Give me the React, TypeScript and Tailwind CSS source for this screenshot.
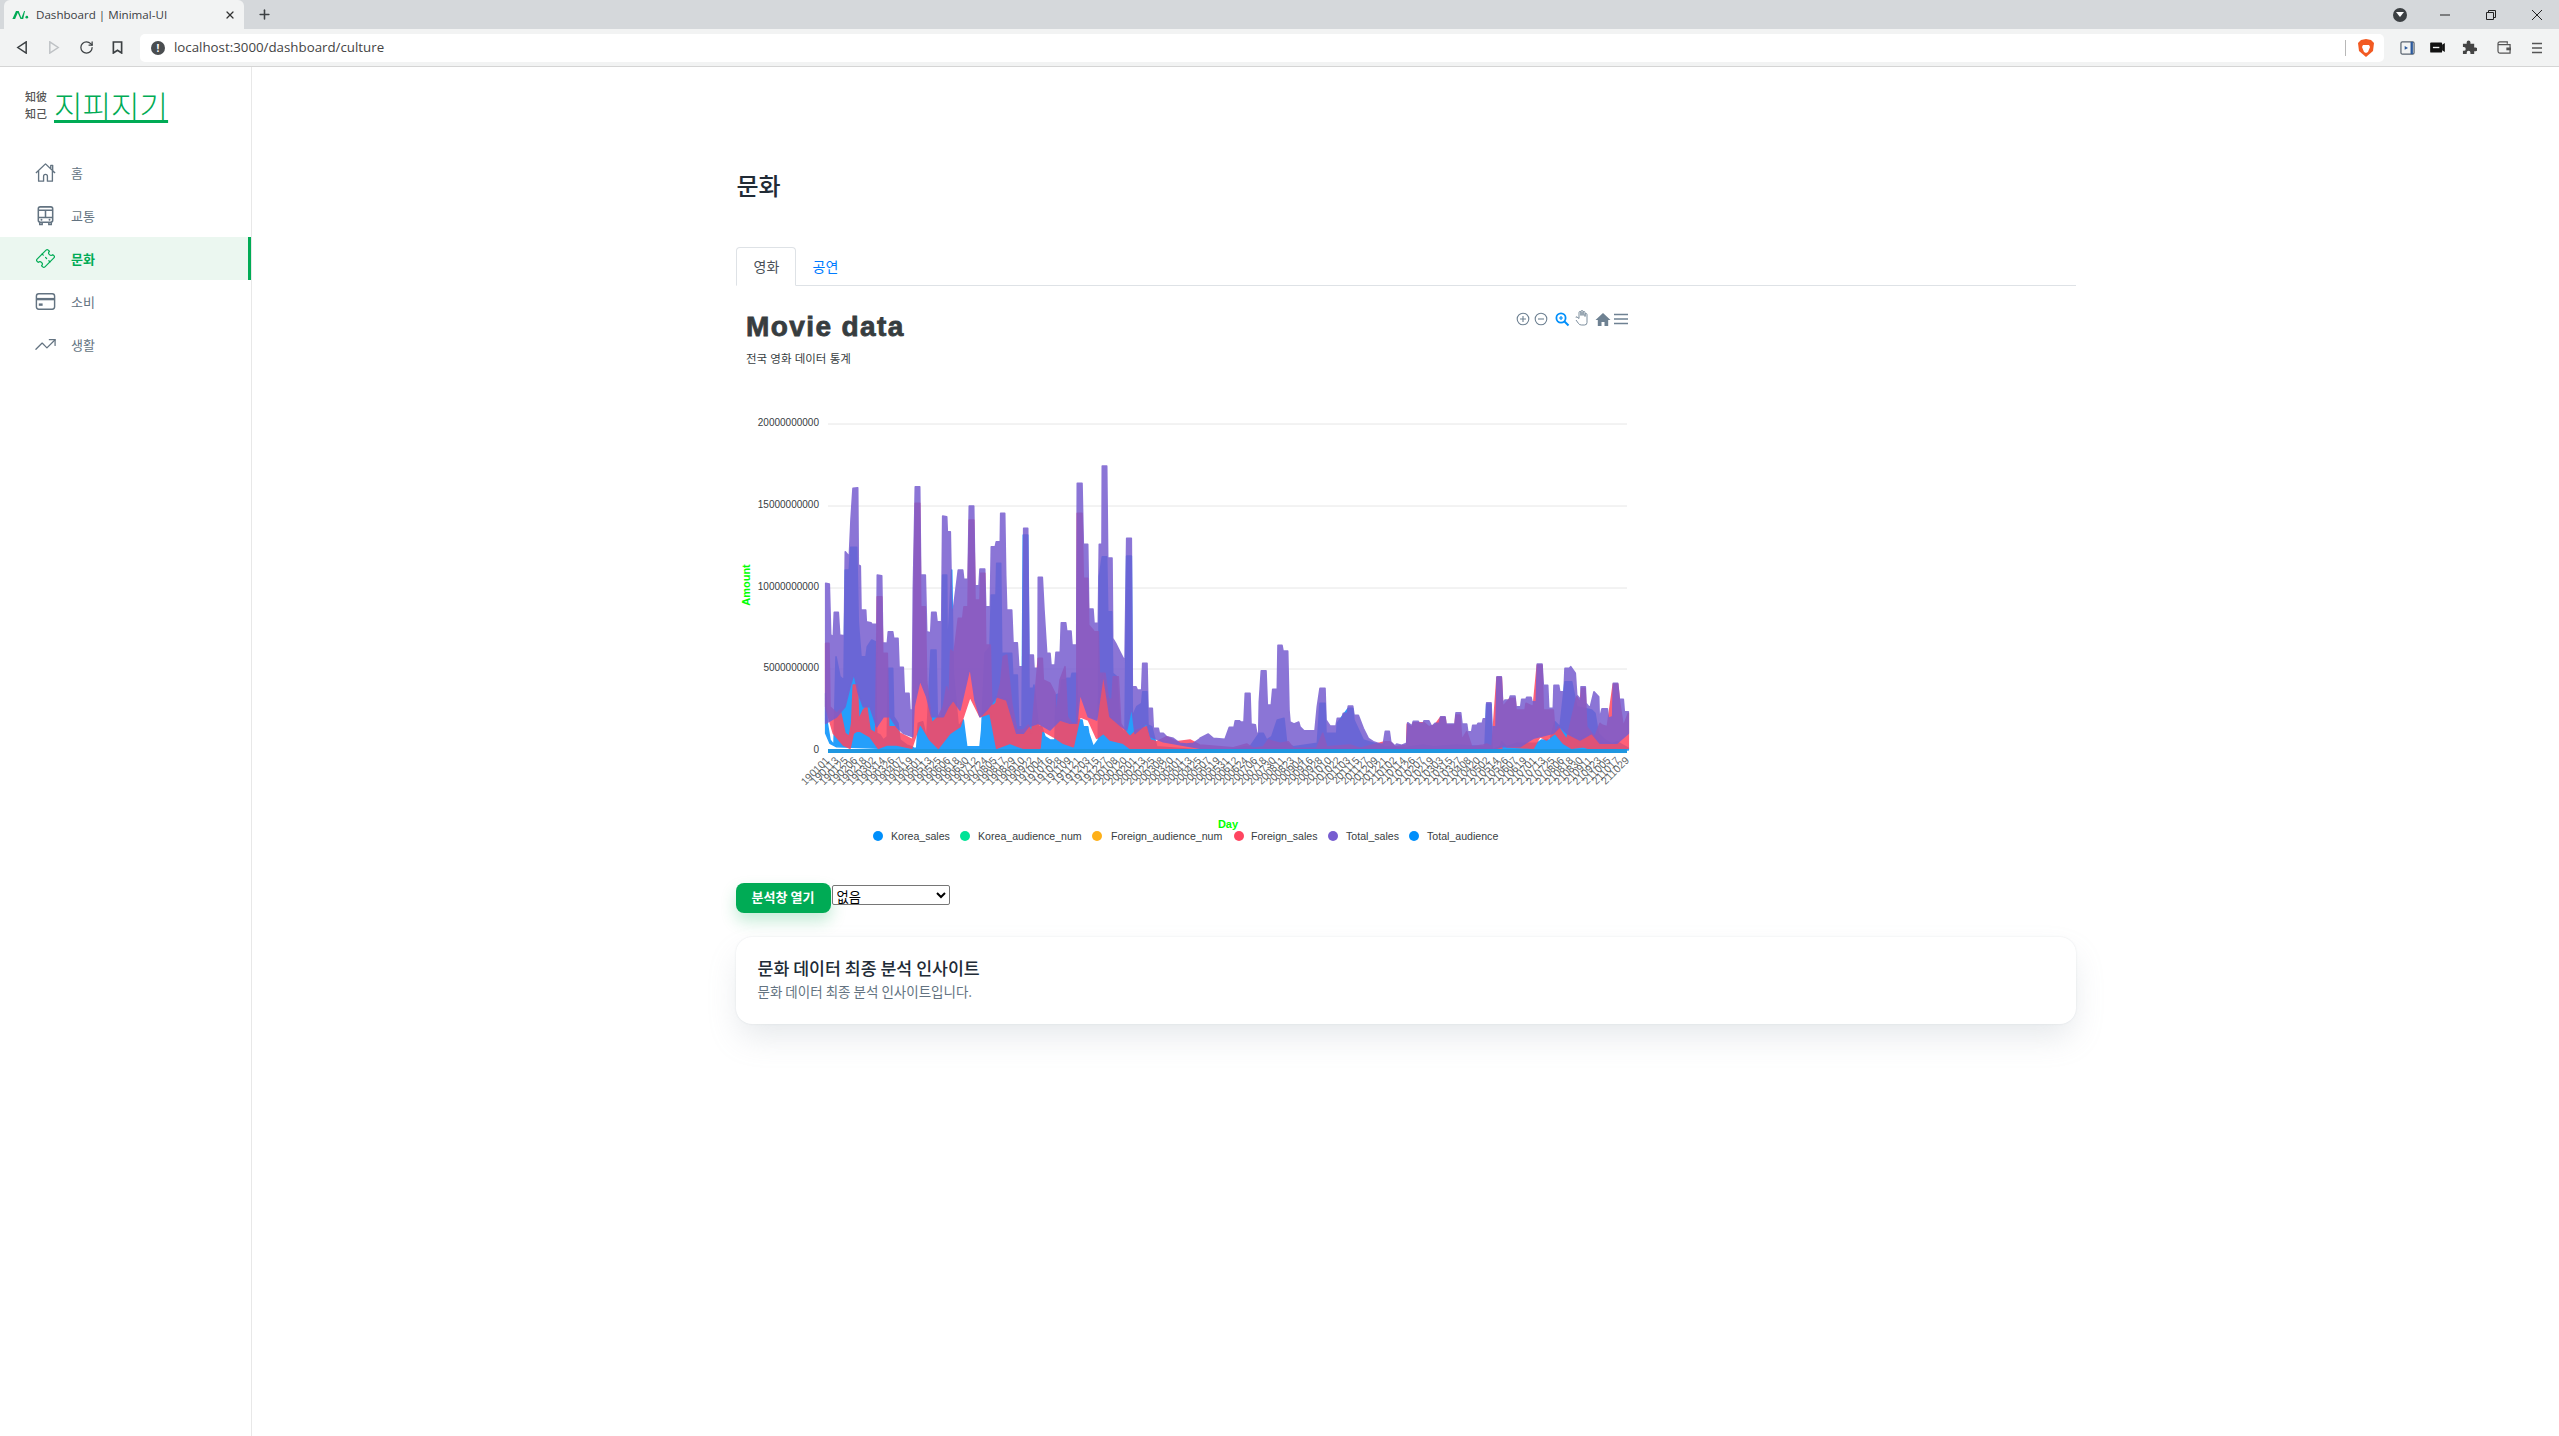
import { Plus, RotateCw, Ticket, TrendingUp, X } from "lucide-react";

type P = [number, number];
const purpleA: P[] = [[287,430],[298,432],[302,585],[310,590],[313,517],[325,517],[329,585],[343,587],[346,335],[358,350],[363,238],[369,145],[383,143],[385,375],[391,378],[393,510],[407,510],[409,545],[423,548],[425,552],[437,553],[440,660],[442,405],[455,407],[458,608],[472,610],[475,575],[488,575],[491,595],[504,595],[507,682],[520,682],[523,760],[537,760],[540,810],[547,810],[550,450],[556,140],[569,140],[572,405],[586,405],[590,575],[602,578],[605,517],[618,517],[621,545],[635,545],[638,228],[650,230],[652,275],[661,275],[665,510],[670,510],[685,390],[698,390],[701,418],[714,418],[718,198],[731,198],[735,437],[747,437],[750,387],[764,387],[767,500],[781,500],[784,320],[796,320],[799,305],[811,305],[812,220],[824,220],[827,405],[830,510],[845,510],[849,608],[862,608],[866,680],[878,680],[881,265],[893,265],[897,645],[910,645],[912,685],[924,685],[925,412],[937,412],[942,510],[950,640],[960,640],[963,675],[975,675],[978,637],[991,637],[994,548],[1007,548],[1010,573],[1023,573],[1026,615],[1040,615],[1042,130],[1056,130],[1060,313],[1073,313],[1076,507],[1089,507],[1092,550],[1105,550],[1108,313],[1116,313],[1117,78],[1130,78],[1133,354],[1146,354],[1148,595],[1157,610],[1172,640],[1185,665],[1190,295],[1204,295],[1207,740],[1218,740],[1222,750],[1235,750],[1238,670],[1251,670],[1254,805],[1267,805],[1270,865],[1285,865],[1288,880],[1300,880],[1310,890],[1330,895],[1350,910],[1370,912],[1390,910],[1409,897]];
const purpleB: P[] = [[0,415],[25,402],[40,415],[75,418],[88,382],[102,382],[106,362],[118,362],[122,366],[132,366],[136,280],[150,280],[153,372],[166,374],[170,400],[176,400],[178,305],[184,212],[198,212],[202,315],[214,315],[218,268],[232,268],[234,136],[246,136],[249,153],[263,153],[267,330],[270,366],[282,372],[296,366],[300,380],[312,392],[345,392],[352,320],[360,265],[375,265],[378,360],[390,378],[408,378],[412,355],[426,355],[430,340],[442,340],[445,318],[458,318],[462,346],[475,346],[490,385],[505,415],[520,425],[540,432],[550,432],[556,394],[568,394],[572,425],[585,438],[590,432],[605,436],[620,430],[623,368],[636,378],[640,364],[655,364],[657,370],[670,370],[672,362],[686,362],[695,380],[705,370],[718,370],[722,350],[735,350],[738,372],[765,372],[768,338],[782,338],[786,372],[800,372],[803,395],[815,395],[818,376],[831,376],[834,370],[847,370],[850,356],[858,356],[860,308],[873,308],[876,380],[888,380],[891,230],[904,230],[908,310],[915,300],[928,300],[931,288],[945,288],[948,320],[962,320],[965,298],[978,298],[980,292],[993,292],[996,305],[1009,305],[1012,192],[1026,192],[1030,256],[1043,256],[1046,325],[1060,325],[1062,256],[1076,256],[1079,275],[1092,275],[1095,205],[1108,205],[1112,200],[1126,220],[1130,285],[1143,300],[1143,260],[1156,260],[1158,310],[1170,325],[1182,275],[1196,290],[1198,360],[1206,326],[1222,326],[1225,355],[1238,350],[1240,250],[1253,250],[1258,298],[1270,298],[1273,335],[1285,335]];
const purpleBotA: P[] = [[287,850],[320,830],[345,800],[360,740],[372,700],[385,760],[400,800],[420,800],[440,860],[460,830],[480,830],[500,860],[520,880],[548,890],[552,800],[570,720],[590,770],[605,830],[640,830],[655,800],[670,780],[690,810],[720,680],[735,780],[750,830],[770,810],[800,770],[830,780],[860,880],[880,880],[895,860],[925,850],[960,870],[990,840],[1020,850],[1040,850],[1050,760],[1075,830],[1100,840],[1120,700],[1140,830],[1175,860],[1190,870],[1205,800],[1215,880],[1250,850],[1262,890],[1300,905],[1409,925]];
const purpleBotB: P[] = [[0,448],[170,448],[190,445],[250,445],[280,448],[620,448],[880,448],[905,440],[960,440],[1000,415],[1060,400],[1080,380],[1100,400],[1140,420],[1175,400],[1200,430],[1250,430],[1285,400]];
const blueA: P[] = [[287,760],[292,850],[300,900],[312,915],[318,650],[330,710],[342,720],[346,390],[358,390],[362,322],[380,322],[385,545],[393,650],[408,650],[412,620],[425,600],[436,605],[440,880],[450,885],[460,900],[472,890],[475,685],[488,685],[491,830],[504,850],[510,900],[530,915],[545,920],[552,925],[560,925],[565,850],[578,845],[590,900],[603,630],[618,630],[622,830],[635,830],[638,405],[650,405],[652,650],[665,390],[670,700],[685,860],[700,840],[710,920],[750,920],[755,870],[765,640],[780,620],[784,465],[798,465],[800,370],[812,370],[815,640],[845,640],[848,705],[862,705],[866,860],[876,860],[880,285],[893,285],[897,745],[910,745],[912,735],[925,860],[935,860],[945,890],[960,900],[975,900],[978,765],[992,760],[995,720],[1007,720],[1010,715],[1023,715],[1026,700],[1040,700],[1043,840],[1056,840],[1060,860],[1073,860],[1076,880],[1090,920],[1105,900],[1108,410],[1117,350],[1130,350],[1133,515],[1145,515],[1148,700],[1160,710],[1170,860],[1185,880],[1190,348],[1204,348],[1207,830],[1220,800],[1235,790],[1238,755],[1251,755],[1254,855],[1265,860],[1280,920],[1409,930]];
const blueB: P[] = [[0,450],[90,450],[135,440],[150,440],[178,400],[190,400],[200,420],[215,410],[232,360],[252,355],[260,430],[280,440],[352,430],[360,310],[375,310],[378,400],[410,400],[412,370],[445,325],[458,325],[462,360],[490,420],[555,440],[620,445],[630,440],[670,435],[700,440],[770,435],[855,440],[860,312],[873,312],[876,450],[900,440],[905,425],[920,440],[950,430],[1010,430],[1025,420],[1050,420],[1065,365],[1080,380],[1095,245],[1115,245],[1130,320],[1175,330],[1185,340],[1195,400],[1215,420],[1235,432],[1250,425],[1285,445]];
const blueBotA: P[] = [[287,880],[300,910],[320,920],[450,925],[1409,930]];
const blueBotB: P[] = [[0,450],[1285,450]];
const redA: P[] = [[287,610],[297,610],[300,800],[320,820],[330,810],[345,880],[358,890],[365,850],[370,735],[382,735],[386,840],[400,810],[410,800],[420,870],[437,880],[442,470],[455,470],[458,640],[472,640],[476,860],[495,860],[510,880],[530,890],[548,900],[552,450],[556,190],[569,190],[572,500],[586,500],[590,725],[605,850],[625,830],[640,800],[650,740],[658,770],[662,630],[672,640],[685,535],[698,535],[702,500],[714,500],[718,240],[731,240],[735,480],[750,480],[752,400],[764,400],[767,615],[781,615],[785,800],[798,790],[812,730],[820,650],[830,645],[845,790],[860,870],[880,870],[895,855],[905,880],[925,655],[937,655],[940,720],[960,730],[975,760],[978,840],[990,720],[1005,680],[1012,830],[1025,850],[1040,850],[1042,220],[1056,220],[1060,415],[1073,415],[1076,555],[1089,570],[1092,575],[1105,575],[1108,700],[1125,700],[1135,775],[1146,780],[1150,710],[1165,710],[1172,850],[1190,880],[1200,890],[1220,870],[1250,860],[1260,900],[1280,905],[1310,890],[1340,905],[1380,900],[1409,915]];
const redB: P[] = [[0,435],[100,443],[140,432],[160,445],[190,440],[205,420],[240,430],[265,425],[280,445],[350,445],[368,400],[380,440],[450,435],[480,445],[555,425],[570,425],[585,440],[620,435],[622,372],[636,382],[640,368],[655,368],[672,368],[686,380],[705,375],[722,352],[735,352],[738,375],[765,375],[768,345],[780,345],[785,420],[800,395],[815,440],[850,435],[860,432],[876,440],[891,232],[904,232],[908,320],[930,295],[945,295],[948,330],[975,330],[978,310],[1000,320],[1012,195],[1026,195],[1030,330],[1060,330],[1065,400],[1075,380],[1100,420],[1130,290],[1140,310],[1145,265],[1155,265],[1160,380],[1175,400],[1185,410],[1200,370],[1206,375],[1222,380],[1240,252],[1253,252],[1258,300],[1270,380],[1285,340]];
const redBotA: P[] = [[287,800],[310,880],[340,915],[360,925],[370,880],[385,870],[420,890],[445,925],[470,915],[500,915],[545,925],[570,850],[600,900],[625,925],[660,880],[690,860],[720,770],[750,830],[780,820],[800,925],[840,910],[880,925],[930,925],[935,870],[970,890],[1000,910],[1030,920],[1050,830],[1075,840],[1100,895],[1120,880],[1140,900],[1180,910],[1200,925],[1409,925]];
const redBotB: P[] = [[0,448],[905,448],[905,430],[920,440],[1000,445],[1020,410],[1040,420],[1065,400],[1090,430],[1115,445],[1150,440],[1180,450],[1285,445]];

const line = (a: P[], b: P[]): P[] => [
  ...a.map(([x, y]): P => [730 + x / 3, 440 + y / 3]),
  ...b.map(([x, y]): P => [1200 + x / 3, 600 + y / 3]),
];
const band = (top: P[], bottom: P[]) =>
  [...top, ...[...bottom].reverse()].map(([x, y]) => `${x.toFixed(1)},${y.toFixed(1)}`).join(" ");

const xLabels = Array.from({ length: 87 }, (_, i) => {
  const d = new Date(Date.UTC(2019, 0, 1 + i * 12));
  const s = (n: number) => String(n).padStart(2, "0");
  return `${s(d.getUTCFullYear() % 100)}${s(d.getUTCMonth() + 1)}${s(d.getUTCDate())}`;
});

const legend = [
  { c: "#008ffb", cx: 878, tx: 891, t: "Korea_sales" },
  { c: "#00e396", cx: 965, tx: 978, t: "Korea_audience_num" },
  { c: "#feb019", cx: 1097, tx: 1111, t: "Foreign_audience_num" },
  { c: "#ff4560", cx: 1239, tx: 1251, t: "Foreign_sales" },
  { c: "#775dd0", cx: 1333, tx: 1346, t: "Total_sales" },
  { c: "#008ffb", cx: 1414, tx: 1427, t: "Total_audience" },
];
const yTicks = [
  { y: 424, t: "20000000000" },
  { y: 506, t: "15000000000" },
  { y: 588, t: "10000000000" },
  { y: 669, t: "5000000000" },
];

function Series({ color, top, bottom }: { color: string; top: P[]; bottom: P[] }) {
  return (
    <g opacity="0.85">
      <polygon points={band(top, bottom)} fill={color} stroke={color} strokeWidth="1.6" strokeLinejoin="round" />
    </g>
  );
}

function Chart() {
  return (
    <svg viewBox="736 286 900 597" className="block h-[597px] w-[900px] font-['Liberation_Sans','Noto_Sans_CJK_KR',sans-serif]">
      <text x="746" y="336" fontSize="28" fontWeight="900" fill="#373d3f" stroke="#373d3f" strokeWidth="0.8" letterSpacing="1.4">Movie data</text>
      <text x="746" y="363" fontSize="11.5" fill="#373d3f">전국 영화 데이터 통계</text>

      <g fill="none" stroke="#6e8192" strokeWidth="1.1">
        <circle cx="1523" cy="319" r="5.8" />
        <path d="M1520 319h6M1523 316v6" />
        <circle cx="1541" cy="319" r="5.8" />
        <path d="M1538 319h6" />
      </g>
      <g fill="none" stroke="#008ffb" strokeWidth="1.8">
        <circle cx="1561" cy="318" r="4.6" />
        <path d="M1564.5 321.5l4 4" strokeWidth="2" />
        <path d="M1559 318h4M1561 316v4" strokeWidth="1.2" />
      </g>
      <path d="M1576 320l2.5 3.5q1 1.500 3 1.500h3q2.500 0 2.500-2.500v-8q0-1-1-1t-1 1v2v-4q0-1-1-1t-1 1v3v-4q0-1-1-1t-1 1v4v-3q0-1-1-1t-1 1v6l-2-1.500q-1.500-.5-1 .5" fill="#fff" stroke="#6e8192" strokeWidth="0.9" />
      <path d="M1603 313l-7.500 7h2.300v6h3.700v-4h3v4h3.700v-6h2.300z" fill="#6e8192" />
      <path d="M1614 314.500h14M1614 319h14M1614 323.500h14" stroke="#6e8192" strokeWidth="1.300" />

      {yTicks.map((t) => (
        <g key={t.t}>
          <line x1="828" x2="1627" y1={t.y} y2={t.y} stroke="#e6e6e6" />
          <text x="819" y={t.y + 2} textAnchor="end" fontSize="10" fill="#373d3f">{t.t}</text>
        </g>
      ))}
      <text x="819" y="753" textAnchor="end" fontSize="10" fill="#373d3f">0</text>

      <Series color="#008ffb" top={line(blueA, blueB)} bottom={line(blueBotA, blueBotB)} />
      <Series color="#ff4560" top={line(redA, redB)} bottom={line(redBotA, redBotB)} />
      <Series color="#775dd0" top={line(purpleA, purpleB)} bottom={line(purpleBotA, purpleBotB)} />
      <rect x="828" y="749" width="799" height="4" fill="#1f97e0" />

      {xLabels.map((t, i) => (
        <text key={t} x={830 + i * 9.3} y="761" textAnchor="end" fontSize="10.500" fill="#373d3f" fillOpacity="0.8" transform={`rotate(-45 ${830 + i * 9.3} 761)`}>{t}</text>
      ))}

      <text x="0" y="0" fontSize="11" fontWeight="900" fill="#00ff00" textAnchor="middle" transform="translate(750 585) rotate(-90)">Amount</text>
      <text x="1228" y="828" fontSize="11" fontWeight="900" fill="#00ff00" textAnchor="middle">Day</text>

      {legend.map((l) => (
        <g key={l.t}>
          <circle cx={l.cx} cy="836" r="5" fill={l.c} />
          <text x={l.tx} y="840" fontSize="10.600" fill="#373d3f">{l.t}</text>
        </g>
      ))}
    </svg>
  );
}

function Chrome() {
  return (
    <div className="font-['Open_Sans','Liberation_Sans',sans-serif]">
      <div className="flex h-[29px] items-end bg-[#d5d8db] pl-[4px]">
        <div className="flex h-[29px] w-[240px] items-center rounded-t-[6px] bg-[#f2f3f3] pl-[8px] pr-[8px]">
          <svg viewBox="0 0 18 10" className="h-[9px] w-[17px]">
            <path d="M0 10L4 1h3l3 8 3-8h1l-2 9H9L6 3 3 10z" fill="#00ab55" />
            <circle cx="16" cy="8" r="1.500" fill="#00ab55" />
          </svg>
          <span className="ml-[7px] text-[11.600px] leading-none text-[#3c4043]">Dashboard | Minimal-UI</span>
          <X className="ml-auto" size={12} strokeWidth={2.500} color="#333" />
        </div>
        <div className="flex h-[29px] w-[40px] items-center justify-center">
          <Plus size={15} strokeWidth={2.500} color="#3c4043" />
        </div>
        <div className="ml-auto flex h-[29px] items-center text-[#3c3c3c]">
          <div className="flex h-[14px] w-[14px] items-center justify-center rounded-full bg-[#3c4043]">
            <div className="h-0 w-0 border-x-[4px] border-t-[5px] border-x-transparent border-t-white" />
          </div>
          <svg viewBox="0 0 10 10" className="ml-[33px] h-[10px] w-[10px]"><path d="M0 5h10" stroke="#222" /></svg>
          <svg viewBox="0 0 10 10" className="ml-[36px] h-[10px] w-[10px]"><path d="M.5 2.500h7v7h-7zM2.500 2.500v-2h7v7h-2" fill="none" stroke="#222" /></svg>
          <svg viewBox="0 0 10 10" className="ml-[36px] mr-[17px] h-[10px] w-[10px]"><path d="M0 0l10 10M10 0L0 10" stroke="#222" /></svg>
        </div>
      </div>
      <div className="flex h-[38px] items-center border-b border-b-[#d5d5d5] bg-[#f2f3f3]">
        <svg viewBox="0 0 12 14" className="ml-[16px] h-[13px] w-[12px]"><path d="M10.500 1L1.500 7l9 6z" fill="none" stroke="#3c4043" strokeWidth="1.600" /></svg>
        <svg viewBox="0 0 12 14" className="ml-[20px] h-[13px] w-[12px]"><path d="M1.500 1l9 6-9 6z" fill="none" stroke="#bfc2c5" strokeWidth="1.600" /></svg>
        <RotateCw className="ml-[19px]" size={15} strokeWidth={2} color="#3c4043" />
        <svg viewBox="0 0 12 14" className="ml-[18px] h-[13px] w-[11px]"><path d="M1.500 1h9v12l-4.500-3-4.500 3z" fill="none" stroke="#3c4043" strokeWidth="1.800" /></svg>
        <div className="ml-[17px] flex h-[28px] w-[2244px] items-center rounded-[5px] bg-white pl-[11px] pr-[8px]">
          <div className="flex h-[14px] w-[14px] items-center justify-center rounded-full bg-[#4a4d50] text-[10px] font-bold leading-none text-white">!</div>
          <span className="ml-[9px] text-[13.300px] leading-none text-[#444]">localhost:3000/dashboard/culture</span>
          <div className="ml-auto mr-[12px] h-[16px] w-px bg-[#b8b8b8]" />
          <svg viewBox="0 0 16 18" className="mr-[2px] h-[18px] w-[16px]">
            <path d="M8 0l5 1 3 3-1 8-7 6-7-6-1-8 3-3z" fill="#f25a22" />
            <path d="M5 6h6l1 2-2 5-2 1-2-1-2-5z" fill="#fff" />
          </svg>
        </div>
        <svg viewBox="0 0 16 16" className="ml-[16px] h-[15px] w-[15px]"><rect x="1" y="2" width="14" height="13" rx="1.500" fill="#f2f3f3" stroke="#5a6470" strokeWidth="1.300" /><path d="M12.500 2v13" stroke="#2c5a9e" strokeWidth="2.500" /><path d="M5 6.500v4l3.500-2z" fill="#2c5a9e" /></svg>
        <svg viewBox="0 0 16 12" className="ml-[15px] h-[11px] w-[15px]"><rect width="13" height="11" y=".5" rx="1" fill="#111" /><path d="M3 6h7" stroke="#f2f3f3" strokeWidth="1.500" /><path d="M13 3l3-2v10l-3-2z" fill="#111" /></svg>
        <svg viewBox="0 0 16 16" className="ml-[17px] h-[15px] w-[15px]"><path d="M1 4h4V2.500a2 2 0 014 0V4h4v4h1.500a2 2 0 010 4H13v3H9v-1.500a2 2 0 00-4 0V15H1v-3.500h1a2 2 0 000-4H1z" fill="#444" /></svg>
        <svg viewBox="0 0 16 14" className="ml-[20px] h-[13px] w-[15px]"><path d="M1 3q0-2 2-2h8v2M1 3v8q0 2 2 2h11V4H2q-1 0-1-1z" fill="none" stroke="#555" strokeWidth="1.300" /><rect x="10" y="7" width="5" height="3" fill="#555" /></svg>
        <svg viewBox="0 0 10 12" className="ml-[20px] h-[12px] w-[10px]"><path d="M0 1.500h10M0 6h10M0 10.500h10" stroke="#555" strokeWidth="1.500" /></svg>
      </div>
    </div>
  );
}

function Sidebar() {
  const inactive = "flex h-[43px] items-center pl-[34px] text-[#637381]";
  return (
    <aside className="w-[252px] shrink-0 border-r border-r-[#e8e8e8]">
      <div className="flex h-[62px] items-center pl-[25px] pt-[14px]">
        <div className="w-[29px] text-[11px] font-medium leading-[17.500px] text-[#555]">
          <div>知彼</div>
          <div>知己</div>
        </div>
        <span className="text-[31px] font-light leading-[36px] text-[#00ab55] underline underline-offset-[2px]">지피지기</span>
      </div>
      <nav className="mt-[22px]">
        <div className={inactive}>
          <svg viewBox="0 0 24 24" className="h-[23px] w-[23px]" fill="none" stroke="currentColor" strokeWidth="1.400" strokeLinejoin="round">
            <path d="M2 12.500L12 3l10 9.500M17.500 8V4.500h2V10M4.800 10.500V21H10v-5a2 2 0 014 0v5h5.200V10.500" />
          </svg>
          <span className="ml-[14px] text-[13px]">홈</span>
        </div>
        <div className={inactive}>
          <svg viewBox="0 0 24 24" className="h-[23px] w-[23px]" fill="none" stroke="currentColor" strokeWidth="1.600">
            <rect x="4.500" y="3" width="15" height="16" rx="2" />
            <path d="M4.500 6.500h15M4.500 14h15M12 6.500V14" />
            <path d="M6 19v2.500h2.500V19M15.500 19v2.500H18V19" />
            <circle cx="7.800" cy="16.500" r="1" fill="currentColor" stroke="none" />
            <circle cx="16.200" cy="16.500" r="1" fill="currentColor" stroke="none" />
          </svg>
          <span className="ml-[14px] text-[13px]">교통</span>
        </div>
        <div className="flex h-[43px] items-center border-r-[3px] border-r-[#00ab55] bg-[#ebf7f0] pl-[36px] text-[#00ab55]">
          <Ticket className="-rotate-45" size={19} strokeWidth={1.500} />
          <span className="ml-[16px] text-[13px] font-bold">문화</span>
        </div>
        <div className={inactive}>
          <svg viewBox="0 0 24 24" className="h-[23px] w-[23px]" fill="none" stroke="currentColor" strokeWidth="1.500">
            <rect x="2.500" y="4" width="19" height="16" rx="2.500" />
            <path d="M2.500 9.500h19" strokeWidth="2.500" />
            <rect x="5" y="14" width="4" height="2.500" fill="currentColor" stroke="none" />
          </svg>
          <span className="ml-[14px] text-[13px]">소비</span>
        </div>
        <div className={inactive}>
          <TrendingUp size={23} strokeWidth={1.300} />
          <span className="ml-[14px] text-[13px]">생활</span>
        </div>
      </nav>
    </aside>
  );
}

export default function App() {
  return (
    <div className="flex h-[1436px] flex-col overflow-hidden bg-white font-['Noto_Sans_CJK_KR',sans-serif]">
      <Chrome />
      <div className="flex flex-1">
        <Sidebar />
        <main className="flex-1">
          <div className="mx-auto w-[1340px] pt-[100px]">
            <h1 className="ml-[1px] h-[36px] text-[24px] font-medium leading-[36px] text-[#212b36]">문화</h1>
            <div className="mt-[44px] flex h-[39px] border-b border-b-[#dee2e6]">
              <div className="flex h-[39px] w-[60px] items-center justify-center rounded-t-[4px] border border-[#dee2e6] border-b-white bg-white pl-[2px] text-[14px] text-[#495057]">영화</div>
              <div className="ml-[17px] flex h-[38px] items-center text-[14px] text-[#007bff]">공연</div>
            </div>
            <Chart />
            <div className="flex items-start">
              <button className="h-[30px] w-[95px] rounded-[8px] bg-[#00ab55] pb-[2px] text-[13px] font-bold text-white shadow-[0_8px_16px_0_rgba(0,171,85,0.24)]">분석창 열기</button>
              <select className="ml-[1px] mt-[2px] h-[20px] w-[118px] rounded-[2px] border border-[#767676] bg-white text-[13.333px] text-black">
                <option>없음</option>
              </select>
            </div>
            <div className="mt-[24px] h-[87px] rounded-[16px] bg-white px-[22px] pt-[19px] shadow-[0_0_2px_0_rgba(145,158,171,0.24),0_16px_32px_-4px_rgba(145,158,171,0.24)]">
              <h2 className="text-[17.300px] font-medium leading-[24px] text-[#212b36]">문화 데이터 최종 분석 인사이트</h2>
              <p className="text-[13.500px] leading-[22px] text-[#637381]">문화 데이터 최종 분석 인사이트입니다.</p>
            </div>
          </div>
        </main>
      </div>
    </div>
  );
}
